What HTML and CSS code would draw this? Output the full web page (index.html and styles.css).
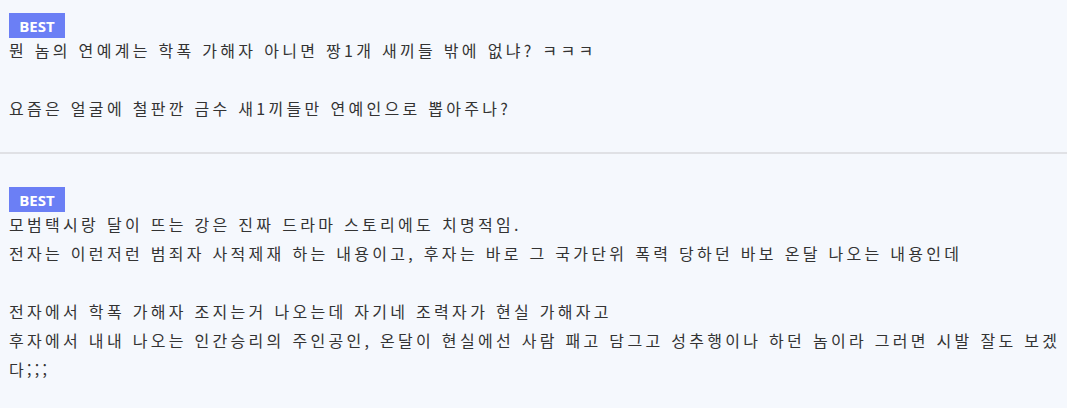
FILE: index.html
```html
<!DOCTYPE html>
<html lang="ko">
<head>
<meta charset="utf-8">
<link rel="stylesheet" href="styles.css">
</head>
<body>
<div class="list">
  <div class="comment first">
    <span class="badge">BEST</span>
    <p class="text">뭔 놈의 연예계는 학폭 가해자 아니면 짱1개 새끼들 밖에 없냐? ㅋㅋㅋ<br><br>요즘은 얼굴에 철판깐 금수 새1끼들만 연예인으로 뽑아주나?</p>
  </div>
  <div class="comment">
    <span class="badge">BEST</span>
    <p class="text">모범택시랑 달이 뜨는 강은 진짜 드라마 스토리에도 치명적임.<br>전자는 이런저런 범죄자 사적제재 하는 내용이고, 후자는 바로 그 국가단위 폭력 당하던 바보 온달 나오는 내용인데<br><br>전자에서 학폭 가해자 조지는거 나오는데 자기네 조력자가 현실 가해자고<br>후자에서 내내 나오는 인간승리의 주인공인, 온달이 현실에선 사람 패고 담그고 성추행이나 하던 놈이라 그러면 시발 잘도 보겠다;;;</p>
  </div>
</div>
</body>
</html>
```

FILE: styles.css
```css
html, body {
  margin: 0;
  padding: 0;
  background: #f5f8fd;
}
.list {
  display: flex;
  flex-direction: column;
}
.comment {
  padding: 33px 0 0 9px;
  display: flex;
  flex-direction: column;
  align-items: flex-start;
}
.comment.first {
  padding-top: 13px;
  padding-bottom: 29px;
  border-bottom: 2px solid #e0e1e5;
}
.badge {
  display: inline-flex;
  align-items: center;
  justify-content: center;
  width: 56px;
  height: 25px;
  background: #6b7ff5;
  color: #fff;
  font-family: "Open Sans", "Noto Sans", sans-serif;
  font-weight: 700;
  font-size: 15px;
  margin-bottom: -2px;
}
.text {
  margin: 0;
  font-family: "Noto Sans CJK KR", "Noto Sans", sans-serif;
  font-size: 16px;
  letter-spacing: 3.3px;
  line-height: 29px;
  color: #333;
}
```
